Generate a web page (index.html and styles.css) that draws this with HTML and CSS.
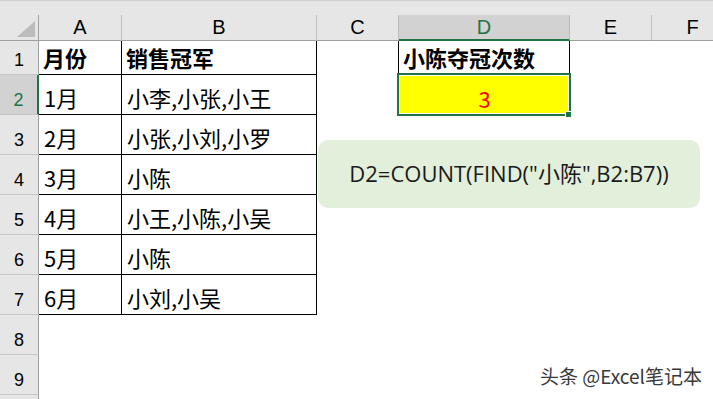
FILE: index.html
```html
<!DOCTYPE html>
<html lang="zh-CN">
<head>
<meta charset="utf-8">
<title>Excel</title>
<link rel="stylesheet" href="styles.css">
</head>
<body>
<div class="page">
  <div class="strip"></div>
  <div class="sheet">
    <div class="row hdr">
      <div class="corner"><svg width="18" height="16" viewBox="0 0 18 16"><polygon points="18,0 18,16 0,16" fill="#bcbcbc"/></svg></div>
      <div class="ch">A</div>
      <div class="ch">B</div>
      <div class="ch">C</div>
      <div class="ch sel-col">D</div>
      <div class="ch">E</div>
      <div class="ch">F</div>
    </div>
    <div class="row r1">
      <div class="rh">1</div>
      <div class="c tb b">月份</div>
      <div class="c tb b">销售冠军</div>
      <div class="c lb"></div>
      <div class="c tb b">小陈夺冠次数</div>
      <div class="c"></div>
      <div class="c"></div>
    </div>
    <div class="row">
      <div class="rh sel-row">2</div>
      <div class="c tb">1月</div>
      <div class="c tb">小李,小张,小王</div>
      <div class="c"></div>
      <div class="c yellow"><span class="red">3</span><span class="selbox"></span><span class="handle"></span></div>
      <div class="c"></div>
      <div class="c"></div>
    </div>
    <div class="row">
      <div class="rh">3</div>
      <div class="c tb">2月</div>
      <div class="c tb">小张,小刘,小罗</div>
      <div class="c"></div><div class="c"></div><div class="c"></div><div class="c"></div>
    </div>
    <div class="row">
      <div class="rh">4</div>
      <div class="c tb">3月</div>
      <div class="c tb">小陈</div>
      <div class="c"></div><div class="c"></div><div class="c"></div><div class="c"></div>
    </div>
    <div class="row">
      <div class="rh">5</div>
      <div class="c tb">4月</div>
      <div class="c tb">小王,小陈,小吴</div>
      <div class="c"></div><div class="c"></div><div class="c"></div><div class="c"></div>
    </div>
    <div class="row">
      <div class="rh">6</div>
      <div class="c tb">5月</div>
      <div class="c tb">小陈</div>
      <div class="c"></div><div class="c"></div><div class="c"></div><div class="c"></div>
    </div>
    <div class="row">
      <div class="rh">7</div>
      <div class="c tb">6月</div>
      <div class="c tb">小刘,小吴</div>
      <div class="c"></div><div class="c"></div><div class="c"></div><div class="c"></div>
    </div>
    <div class="row">
      <div class="rh">8</div>
      <div class="c"></div><div class="c"></div><div class="c"></div><div class="c"></div><div class="c"></div><div class="c"></div>
    </div>
    <div class="row">
      <div class="rh">9</div>
      <div class="c"></div><div class="c"></div><div class="c"></div><div class="c"></div><div class="c"></div><div class="c"></div>
    </div>
    <div class="row">
      <div class="rh"></div>
      <div class="c"></div><div class="c"></div><div class="c"></div><div class="c"></div><div class="c"></div><div class="c"></div>
    </div>
  </div>
  <div class="formula">D2=COUNT(FIND("小陈",B2:B7))</div>
  <div class="mark">头条 @Excel笔记本</div>
</div>
</body>
</html>
```
FILE: styles.css
```css
html, body {
  margin: 0;
  padding: 0;
  background: #ffffff;
  overflow: hidden;
}
.page {
  position: relative;
  width: 713px;
  height: 399px;
  overflow: hidden;
}
.strip {
  height: 15px;
  box-sizing: border-box;
  background: #e6e6e6;
  border-top: 1px solid #d0d0d0;
}
.sheet {
  display: flex;
  flex-direction: column;
}
.row {
  display: grid;
  grid-template-columns: 39px 83px 195px 82px 171px 82px 82px;
  height: 40px;
}
.row.hdr { height: 26px; }
.row.r1 { height: 34px; }
.row > div { box-sizing: border-box; }
.corner {
  background: #e6e6e6;
  border-right: 1px solid #a0a0a0;
  border-bottom: 1px solid #a0a0a0;
  display: flex;
  justify-content: flex-end;
  align-items: flex-end;
  padding: 0 3px 3px 0;
}
.ch {
  background: #e6e6e6;
  border-right: 1px solid #bdbdbd;
  border-bottom: 1px solid #a0a0a0;
  display: flex;
  align-items: center;
  justify-content: center;
  font-family: "Liberation Sans", Arial, sans-serif;
  font-size: 20px;
  color: #000;
}
.ch.sel-col {
  background: #d2d2d2;
  color: #217346;
  border-bottom: 2px solid #217346;
}
.rh {
  background: #e6e6e6;
  border-right: 1px solid #a0a0a0;
  border-bottom: 1px solid #c6c6c6;
  display: flex;
  align-items: flex-end;
  justify-content: center;
  padding-bottom: 5px;
  font-family: "Liberation Sans", Arial, sans-serif;
  font-size: 18px;
  line-height: 18px;
  color: #000;
}
.rh.sel-row {
  background: #d2d2d2;
  color: #217346;
  border-right: 2px solid #217346;
}
.c {
  position: relative;
  display: flex;
  align-items: flex-end;
  padding: 0 0 6px 5px;
  font-family: "Noto Sans CJK SC", "Microsoft YaHei", sans-serif;
  font-size: 22px;
  line-height: 22px;
  color: #000;
  white-space: nowrap;
}
.c.tb {
  border-right: 1px solid #000;
  border-bottom: 1px solid #000;
}
.c.lb { border-right: 1px solid #000; }
.c.b { font-weight: bold; padding-left: 4px; }
.c.yellow {
  background: #ffff00;
  justify-content: center;
  padding-left: 0;
}
.red { color: #ff0000; }
.selbox {
  position: absolute;
  left: -2px;
  top: -2px;
  right: -1px;
  bottom: -1px;
  border: 2px solid #217346;
  box-shadow: inset 0 0 0 1px #ffffff;
}
.handle {
  position: absolute;
  right: -2px;
  bottom: -3px;
  width: 5px;
  height: 5px;
  background: #217346;
  border: 1px solid #ffffff;
}
.formula {
  position: absolute;
  left: 318px;
  top: 140px;
  width: 382px;
  height: 68px;
  border-radius: 10px;
  background: #e2efda;
  display: flex;
  align-items: center;
  justify-content: center;
  padding-bottom: 4px;
  box-sizing: border-box;
  font-family: "Open Sans", "Noto Sans CJK SC", sans-serif;
  font-size: 22px;
  color: #1a1a1a;
}
.mark {
  position: absolute;
  right: 11px;
  top: 364px;
  font-family: "Noto Sans CJK SC", sans-serif;
  font-size: 19px;
  line-height: 24px;
  color: #3a3a3a;
  text-shadow: 0 0 2px #ffffff, 0 0 2px #ffffff;
}
```
